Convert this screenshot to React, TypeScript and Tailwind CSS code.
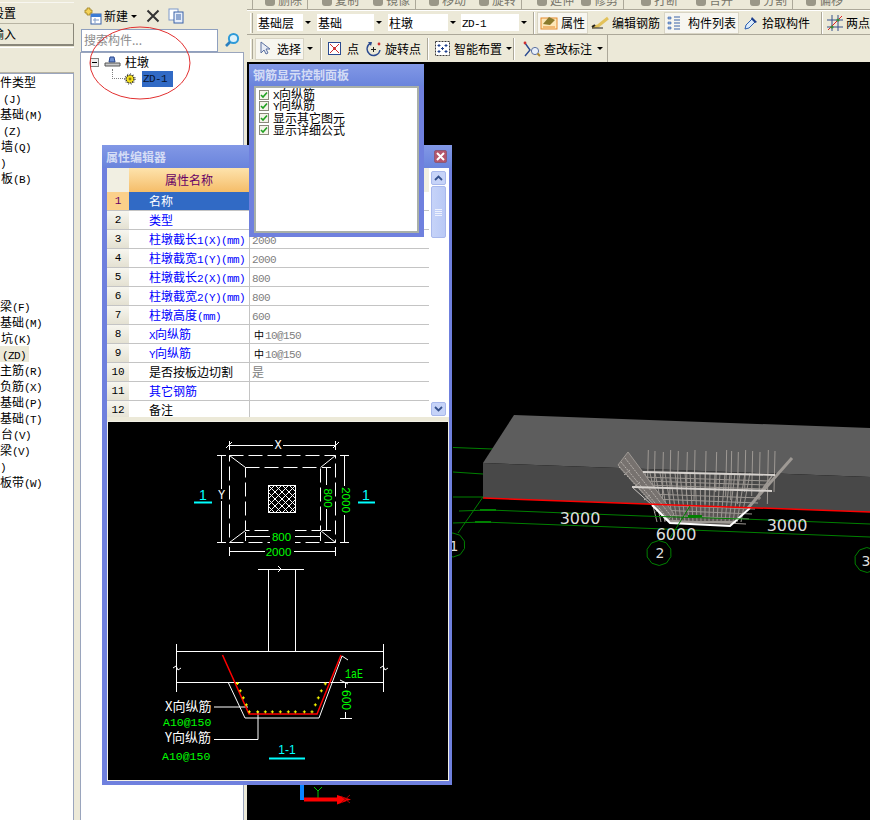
import React from 'react';

// ascii runs are set in a mono face, squeezed to half the width of the CJK glyphs
function Zh({ text }: { text: string }) {
  return (
    <>
      {text.split(/([\x20-\x7e]+)/).map((part, i) =>
        /^[\x20-\x7e]+$/.test(part) ? (
          <span key={i} className="font-['Liberation_Mono','Noto_Sans_CJK_SC',monospace] text-[11px] tracking-[-0.6px]">
            {part}
          </span>
        ) : (
          <span key={i}>{part}</span>
        ),
      )}
    </>
  );
}

function Caret() {
  return <span className="inline-block h-0 w-0 border-x-[3px] border-t-[3px] border-x-transparent border-t-black" />;
}

function Grip() {
  return <span className="h-[20px] w-[3px] shrink-0 border-x border-x-white border-r-[#aca899] bg-[#ece9d8]" />;
}

function Sep() {
  return <span className="block h-[22px] w-[2px] shrink-0 border-l border-[#aca899] bg-white" />;
}

function Select({ label, width }: { label: string; width: string }) {
  return (
    <div className={`flex h-[17px] shrink-0 items-center justify-between bg-white pl-[1px] ${width}`}>
      <span className="whitespace-nowrap text-xs leading-none">
        <Zh text={label} />
      </span>
      <span className="flex h-[17px] w-[9px] items-center justify-center bg-[#ece9d8]">
        <Caret />
      </span>
    </div>
  );
}

function ToolButton({
  icon,
  label,
  width,
  active,
  caret,
  gap = 'gap-[3px]',
}: {
  icon: React.ReactNode;
  label: string;
  width: string;
  active?: boolean;
  caret?: boolean;
  gap?: string;
}) {
  return (
    <div
      className={`flex h-[22px] shrink-0 items-center whitespace-nowrap text-xs ${gap} ${width} ${
        active ? 'border border-[#d8d4c4] bg-[#f7f6f0] px-[2px]' : ''
      }`}
    >
      {icon}
      <span>{label}</span>
      {caret && (
        <span className="flex items-center">
          <Caret />
        </span>
      )}
    </div>
  );
}

const IconNew = () => (
  <svg width="18" height="18" viewBox="0 0 18 18" className="shrink-0">
    <rect x="7" y="7" width="10" height="10" fill="#fff" stroke="#3a62a8" />
    <rect x="7" y="7" width="10" height="3" fill="#3a7bd5" />
    <path d="M9 13h6M11 11v5" stroke="#7f9bc8" />
    <path d="M3 1h3v2h2v3H6v2H3V6H1V3h2z" fill="#f5d35a" stroke="#9c7f1c" strokeWidth=".8" />
  </svg>
);

const IconCopy = () => (
  <svg width="16" height="16" viewBox="0 0 16 16" className="shrink-0">
    <rect x="1" y="1" width="9" height="11" fill="#fff" stroke="#7d99c9" />
    <rect x="6" y="4" width="9" height="11" fill="#e6eefb" stroke="#3a62a8" />
    <path d="M8 7h5M8 9h5M8 11h5" stroke="#3a62a8" />
  </svg>
);

const IconSearch = () => (
  <svg width="16" height="16" viewBox="0 0 16 16">
    <circle cx="9.5" cy="6.5" r="4.6" fill="#dff2fb" stroke="#2f9bd8" strokeWidth="2" />
    <path d="M6 10l-4 4" stroke="#2a7fc0" strokeWidth="2.6" />
  </svg>
);

const IconPier = () => (
  <svg width="17" height="12" viewBox="0 0 17 12">
    <path d="M6 1h4l1 5H5z" fill="#6d8fd0" stroke="#27458c" />
    <path d="M1 7h15v3H1z" fill="#c9c9c9" stroke="#555" />
  </svg>
);

const IconGear = () => (
  <svg width="12" height="12" viewBox="0 0 12 12">
    <circle cx="6" cy="6" r="4" fill="#f6e21c" stroke="#222" strokeWidth="1.2" strokeDasharray="1.6 .9" />
    <circle cx="6" cy="6" r="5.2" fill="none" stroke="#333" strokeWidth="1" strokeDasharray="1 2" />
    <circle cx="6" cy="6" r="1.4" fill="#8a7a10" />
  </svg>
);

const IconProps = () => (
  <svg width="18" height="15" viewBox="0 0 18 15" className="shrink-0">
    <rect x="1" y="3" width="16" height="11" fill="#fde7b8" stroke="#e58a2c" />
    <path d="M3 9l6-7 6 3-5 5z" fill="#8a7a2c" />
    <path d="M3 12h12" stroke="#e58a2c" />
  </svg>
);

const IconEditRebar = () => (
  <svg width="18" height="14" viewBox="0 0 18 14" className="shrink-0">
    <path d="M1 11l6-1 10-8" stroke="#e3c25a" strokeWidth="3" fill="none" />
    <path d="M1 12h11" stroke="#222" />
    <path d="M1 11l3-2" stroke="#222" strokeWidth="2" />
  </svg>
);

const IconList = () => (
  <svg width="14" height="15" viewBox="0 0 14 15" className="shrink-0">
    <path d="M1 2h3v2H1zM1 7h3v2H1zM1 12h3v2H1z" fill="#8fb0df" stroke="#3a62a8" strokeWidth=".6" />
    <path d="M7 2h6M7 5h6M7 8h6M7 11h6M7 14h6" stroke="#3a62a8" />
  </svg>
);

const IconPicker = () => (
  <svg width="16" height="16" viewBox="0 0 16 16" className="shrink-0">
    <path d="M2 14l1-4 6-6 3 3-6 6z" fill="#dcecfb" stroke="#2d5fb0" />
    <path d="M9 2l5 5-2 1-4-4z" fill="#1c3f8c" />
  </svg>
);

const IconTwoPoints = () => (
  <svg width="16" height="16" viewBox="0 0 16 16" className="shrink-0">
    <path d="M0 5h16M0 12h16M5 0v16M11 0v16" stroke="#34508c" />
    <path d="M1 15L15 1" stroke="#e02020" />
    <circle cx="5" cy="12" r="1.6" fill="#3a8a3a" />
    <circle cx="11" cy="5" r="1.6" fill="#3a8a3a" />
  </svg>
);

const IconCursor = () => (
  <svg width="14" height="15" viewBox="0 0 14 15" className="shrink-0">
    <path d="M3 1v11l3-3 2 4 2-1-2-4h4z" fill="#e8ecf5" stroke="#5a6fa0" />
  </svg>
);

const IconPoint = () => (
  <svg width="13" height="13" viewBox="0 0 13 13" className="shrink-0">
    <rect x=".5" y=".5" width="12" height="12" fill="#fff" stroke="#2a4a90" />
    <path d="M2 2l9 9M11 2l-9 9" stroke="#d03030" />
    <circle cx="6.5" cy="6.5" r="1.4" fill="#d03030" />
  </svg>
);

const IconRotate = () => (
  <svg width="16" height="16" viewBox="0 0 16 16" className="shrink-0">
    <path d="M5 2a6.5 6.5 0 1 0 9 7" fill="none" stroke="#2a4a90" strokeWidth="1.4" />
    <path d="M5 8.5h5M7.5 6v5" stroke="#222" />
    <circle cx="13" cy="3" r="1.4" fill="#d03030" />
    <path d="M2 1l4 0-1 4z" fill="#2a4a90" />
  </svg>
);

const IconSmart = () => (
  <svg width="15" height="15" viewBox="0 0 15 15" className="shrink-0">
    <rect x=".5" y=".5" width="14" height="14" fill="#fff" stroke="#3a3a3a" strokeDasharray="2 1" />
    <path d="M4 3v3M2.5 4.5h3M11 3v3M9.5 4.5h3M4 9v3M2.5 10.5h3M11 9v3M9.5 10.5h3M7.5 6v3M6 7.5h3" stroke="#1c3f8c" />
  </svg>
);

const IconCheck = () => (
  <svg width="18" height="16" viewBox="0 0 18 16" className="shrink-0">
    <path d="M2 2l5 7-5 6" stroke="#2a4a90" fill="none" strokeWidth="1.4" />
    <circle cx="2" cy="2" r="1.4" fill="#d03030" />
    <circle cx="12" cy="10" r="3.6" fill="#e8f0fa" stroke="#5a6fa0" />
    <path d="M14.5 12.5l2.500 2.500" stroke="#b08a30" strokeWidth="2" />
  </svg>
);

// [cell width, label, starts a new toolbar group]
const topStrip: [string, string, boolean][] = [
  ['w-[55px]', '删除', true],
  ['w-[57px]', '复制', true],
  ['w-[51px]', '镜像', false],
  ['w-[56px]', '移动', true],
  ['w-[50px]', '旋转', false],
  ['w-[58px]', '延伸', true],
  ['w-[44px]', '修剪', false],
  ['w-[60px]', '打断', true],
  ['w-[55px]', '合并', false],
  ['w-[54px]', '分割', false],
  ['w-[56px]', '偏移', true],
];

const listTop: [string, string][] = [
  ['件类型', 'pl-0'],
  ['(J)', 'pl-[3px]'],
  ['基础(M)', 'pl-0'],
  ['(Z)', 'pl-[3px]'],
  ['墙(Q)', 'pl-px'],
  [')', 'pl-0'],
  ['板(B)', 'pl-px'],
];

const listBottom: [string, string][] = [
  ['梁(F)', 'pl-0'],
  ['基础(M)', 'pl-0'],
  ['坑(K)', 'pl-px'],
  ['(ZD)', 'pl-[2px]'],
  ['主筋(R)', 'pl-0'],
  ['负筋(X)', 'pl-0'],
  ['基础(P)', 'pl-0'],
  ['基础(T)', 'pl-0'],
  ['台(V)', 'pl-px'],
  ['梁(V)', 'pl-0'],
  [')', 'pl-0'],
  ['板带(W)', 'pl-0'],
];

type Row = { no: number; name: string; value?: string; phi?: boolean; plain?: boolean };

const rows: Row[] = [
  { no: 1, name: '名称', value: 'ZD-1' },
  { no: 2, name: '类型' },
  { no: 3, name: '柱墩截长1(X)(mm)', value: '2000' },
  { no: 4, name: '柱墩截宽1(Y)(mm)', value: '2000' },
  { no: 5, name: '柱墩截长2(X)(mm)', value: '800' },
  { no: 6, name: '柱墩截宽2(Y)(mm)', value: '800' },
  { no: 7, name: '柱墩高度(mm)', value: '600' },
  { no: 8, name: 'X向纵筋', value: '10@150', phi: true },
  { no: 9, name: 'Y向纵筋', value: '10@150', phi: true },
  { no: 10, name: '是否按板边切割', value: '是', plain: true },
  { no: 11, name: '其它钢筋' },
  { no: 12, name: '备注', plain: true },
];

function TitleBar({ title, height, close }: { title: string; height: string; close?: boolean }) {
  return (
    <div className={`flex shrink-0 items-center justify-between bg-gradient-to-b from-[#8298e6] to-[#6a84dc] pl-[4px] pr-[5px] ${height}`}>
      <span className="text-xs font-bold text-[#d4dcf5]">{title}</span>
      {close && (
        <span className="flex h-[13px] w-[13px] items-center justify-center rounded-[2px] border border-[#8a5a7a] bg-[#b5566c]">
          <svg width="9" height="9" viewBox="0 0 9 9">
            <path d="M1 1l7 7M8 1L1 8" stroke="#fff" strokeWidth="2" />
          </svg>
        </span>
      )}
    </div>
  );
}

function ScrollBar() {
  return (
    <div className="flex w-[20px] shrink-0 flex-col bg-white pt-[3px] pr-[3px] pl-[2px]">
      <span className="flex h-[14px] items-center justify-center rounded-[2px] border border-[#a8b8ec] bg-[#c6d3f8]">
        <svg width="9" height="6" viewBox="0 0 9 6">
          <path d="M1 5l3.5-3.5L8 5" stroke="#34508c" strokeWidth="1.8" fill="none" />
        </svg>
      </span>
      <span className="mt-[1px] flex h-[52px] flex-col items-center justify-center gap-[1px] rounded-[2px] border border-[#a8b8ec] bg-gradient-to-r from-[#c6d3f8] to-[#b9c9f6]">
        <span className="h-px w-[7px] bg-[#eef2fd]" />
        <span className="h-px w-[7px] bg-[#eef2fd]" />
        <span className="h-px w-[7px] bg-[#eef2fd]" />
        <span className="h-px w-[7px] bg-[#eef2fd]" />
      </span>
      <span className="mt-auto mb-px flex h-[14px] items-center justify-center rounded-[2px] border border-[#a8b8ec] bg-[#c6d3f8]">
        <svg width="9" height="6" viewBox="0 0 9 6">
          <path d="M1 1l3.5 3.5L8 1" stroke="#34508c" strokeWidth="1.8" fill="none" />
        </svg>
      </span>
    </div>
  );
}

function PropertyGrid() {
  return (
    <div className="flex h-[249px] shrink-0 bg-white">
      <div className="min-w-0 flex-1 overflow-hidden">
        <div className="flex h-[24px] text-xs">
          <span className="w-[22px] shrink-0 bg-[#f1efe2]" />
          <span className="flex w-[120px] shrink-0 items-center justify-center bg-gradient-to-b from-[#fde3ac] to-[#f5bd68] text-[#660066]">属性名称</span>
          <span className="flex-1 bg-[#f1efe2]" />
        </div>
        {rows.map((r) => (
          <div key={r.no} className="flex h-[19px] border-b border-[#c4c4c4] text-xs leading-[18px]">
            <span
              className={`w-[22px] shrink-0 text-center font-['Liberation_Mono',monospace] text-[11px] ${
                r.no === 1 ? 'bg-[#fbd08a] text-[#660066]' : 'bg-gradient-to-b from-[#f7f6ef] to-[#e4e1d2]'
              }`}
            >
              {r.no}
            </span>
            <span
              className={`w-[121px] shrink-0 border-r border-[#c4c4c4] pl-[20px] whitespace-nowrap ${
                r.no === 1 ? 'bg-[#316ac5] text-white' : r.plain ? 'text-black' : 'text-[#0000ff]'
              }`}
            >
              <Zh text={r.name} />
            </span>
            <span className="flex-1 pl-[2px] whitespace-nowrap text-[#808080]">
              {r.phi && <span className="pr-[1px] pl-[2px] text-[10px] text-black">中</span>}
              {r.value && <Zh text={r.value} />}
            </span>
          </div>
        ))}
      </div>
      <ScrollBar />
    </div>
  );
}

const mono = "'Liberation Mono', 'Noto Sans CJK SC', monospace";
const sans = "'Liberation Sans', sans-serif";
const zh = "'Noto Sans CJK SC', 'Liberation Mono', sans-serif";

function Plan() {
  const hatch = [0, 7, 14, 21, 28, -7, -14, -21];
  return (
    <g fill="none" stroke="#fff" strokeWidth="1">
      <rect x="229.5" y="455.5" width="106" height="87" strokeDasharray="14 5" />
      <rect x="245.5" y="467.5" width="75" height="63" strokeDasharray="14 5" />
      <path d="M229.5 455.5l16 12M335.5 455.5l-15 12M229.5 542.5l16-12M335.5 542.5l-15-12" />
      <rect x="268.5" y="485.5" width="27" height="27" />
      <clipPath id="hatch">
        <rect x="268.5" y="485.5" width="27" height="27" />
      </clipPath>
      <g clipPath="url(#hatch)">
        {hatch.map((d) => (
          <path key={d} d={`M${268 + d} 485l27 27M${296 - d} 485l-27 27`} />
        ))}
      </g>
      <path d="M229 445.5h107M229.5 441v9M335.5 441v9M226 448l6-6M333 448l6-6" />
      <path d="M221.5 455v87M217 455.500h9M217 542.500h9" />
      <path d="M344.5 455v87M340 455.500h9M340 542.500h9" />
      <path d="M326.5 467v63M322 467.500h9M322 530.500h9" />
      <path d="M245 536.5h75M245.5 532v9M320.5 532v9" />
      <path d="M229 551.5h107M229.5 547v9M335.5 547v9" />
      <g stroke="none" fontFamily={mono} fontSize="12" textAnchor="middle">
        <rect x="273" y="440" width="10" height="10" fill="#000" />
        <text x="278" y="449" fill="#fff">X</text>
        <rect x="217" y="489" width="9" height="12" fill="#000" />
        <text x="221.5" y="499" fill="#fff">Y</text>
      </g>
      <g stroke="none" fontFamily={sans} fontSize="11.500" textAnchor="middle" fill="#00ff00">
        <rect x="270" y="530" width="25" height="13" fill="#000" />
        <text x="281.5" y="541">800</text>
        <rect x="265" y="545" width="29" height="13" fill="#000" />
        <text x="278.5" y="556">2000</text>
        <rect x="321" y="485" width="12" height="24" fill="#000" />
        <text x="0" y="0" transform="translate(324 498) rotate(90)">800</text>
        <rect x="339" y="486" width="12" height="29" fill="#000" />
        <text x="0" y="0" transform="translate(341.500 500) rotate(90)">2000</text>
      </g>
      <g stroke="none" fontFamily={sans} fontSize="14" textAnchor="middle" fill="#00ffff">
        <text x="203" y="500">1</text>
        <text x="366" y="500">1</text>
      </g>
      <path d="M194 502.500h18M358 502.500h17" stroke="#00ffff" strokeWidth="2" />
    </g>
  );
}

function Section() {
  const dots = [
    [433, 454], [458, 454], [481, 454], [502, 454], [526, 454], [550, 454], [571, 454], [598, 454], [621, 454],
    [397, 369], [406, 391], [415, 412], [424, 433], [631, 433], [640, 412], [649, 391], [661, 370],
  ];
  return (
    <g fill="none" stroke="#fff" strokeWidth="1">
      <path d="M258 569.500h46M268.500 569.500V651M295.500 569.500V651" />
      <path d="M278 566l3 3-3 3" />
      <path d="M176.500 651.500h207M176.500 682.500h207M176.500 644v48M383.500 644v48" />
      <path d="M173 668l3-2 2 4 3-2M380 668l3-2 2 4 3-2" />
      <path d="M228 682l17 36h74l23-62" />
      <path d="M342 656l6 4M340 680l8 4" />
      <path d="M214 707h34M214 739.500h44V711" />
      <path d="M345.500 682v36M340 682.500h12M340 718.500h12" />
      <path d="M222.500 655l26.500 59h68l24-59" stroke="#ff0000" strokeWidth="1.500" />
      {dots.map(([x, y]) => (
        <path key={`${x}-${y}`} d={`M${105 + x / 3 - 1.5} ${560 + y / 3 + 0.5}h3M${105 + x / 3} ${560 + y / 3 - 1}v3`} stroke="#ffff00" />
      ))}
      <g stroke="none" fontSize="13" fontFamily={zh}>
        <text x="165" y="711" fill="#fff">X向纵筋</text>
        <text x="165" y="742" fill="#fff">Y向纵筋</text>
      </g>
      <g stroke="none" fontSize="11.500" fontFamily={mono} fill="#00ff00">
        <text x="163" y="726">A10@150</text>
        <text x="162" y="760">A10@150</text>
        <text x="345" y="678" fontSize="13" textLength="18" lengthAdjust="spacingAndGlyphs">1aE</text>
      </g>
      <g stroke="none" fontFamily={sans} fontSize="12" fill="#00ff00" textAnchor="middle">
        <rect x="340" y="688" width="12" height="24" fill="#000" />
        <text x="0" y="0" transform="translate(342 700) rotate(90)">600</text>
      </g>
      <text x="287" y="754" stroke="none" fill="#00ffff" fontSize="12" fontFamily={sans} textAnchor="middle">1-1</text>
      <path d="M269 758.500h36" stroke="#00ffff" strokeWidth="2" />
    </g>
  );
}

function Basket() {
  const bars = [145, 165, 190, 212, 235, 262, 285, 318, 350, 380, 395, 415, 437, 458, 480, 505, 525];
  const meshX = Array.from({ length: 22 }, (_, i) => 645 + i * 5);
  const meshY = [478, 482, 486, 495, 500, 506, 511, 516, 521];
  return (
    <g fill="none" stroke="#9e9994">
      <path d="M652 505l18 18 60 3 20-18z" fill="#5a5654" stroke="none" />
      {bars.map((x, i) => (
        <path key={x} d={`M${600 + x / 3} ${450 + (i % 3)}L${600 + x / 3 - 1} ${492 + (i % 4) * 4}`} />
      ))}
      {meshX.map((x) => (
        <path key={x} d={`M${x} 473L${x + (x - 705) * -0.2} 522`} />
      ))}
      {meshY.map((y, i) => (
        <path key={y} d={`M${640 + i * 3} ${y - 1}L${770 - i * 3} ${y + 3}`} />
      ))}
      <path d="M618 465l10-13 46 62-6 6z" fill="#77726f" />
      <path d="M621 462l48 58M625 458l46 58M619 467l50 55M630 470l-6 5M640 482l-6 5M650 495l-6 5M660 508l-6 5" stroke="#b5b0ab" strokeDasharray="2 1" />
      <path d="M792 458l-44 50" strokeWidth="3" />
      <path d="M772 476l-22 30" strokeWidth="1.500" />
      <path d="M643 472l132 3" stroke="#d6d2ce" strokeWidth="1.800" />
      <path d="M632 487l140 4" stroke="#d6d2ce" strokeWidth="1.800" />
      <path d="M632 487l40 36" stroke="#c8c4c0" />
      <path d="M670 522h66" strokeWidth="2" />
      <path d="M652 505l18 18 60 3 20-18" stroke="#fff" strokeWidth="2" />
    </g>
  );
}

// the viewer draws its grid bubbles as coarse polygons
function Bubble({ cx, cy, r }: { cx: number; cy: number; r: number }) {
  const pts = Array.from({ length: 10 }, (_, i) => {
    const a = (i * Math.PI) / 5 + 0.3;
    return `${(cx + r * Math.cos(a)).toFixed(1)},${(cy + r * Math.sin(a)).toFixed(1)}`;
  }).join(' ');
  return <polygon points={pts} />;
}

function Scene() {
  return (
    <svg className="absolute inset-0 h-full w-full" viewBox="247 62 623 758">
      <g stroke="#008000" fill="none">
        <path d="M453 447.500l40 1.500M453 472l30 2M453 497h30" />
      </g>
      <path d="M514 415L870 428V477L483 463Z" fill="#5d5d5d" />
      <path d="M483 463L870 477V512L483 498Z" fill="#484848" />
      <Basket />
      <path d="M483 498L870 512" stroke="#ff0000" strokeWidth="1.500" />
      <g stroke="#008000" fill="none">
        <path d="M459 511l30-1 154 6 100 3 127 5" />
        <path d="M453 523l30-1 130 5 257 10" />
        <path d="M483 497l-25 36M690 506l-20 32" />
        <path d="M480 510h16M475 522h16M688 516h14" strokeWidth="2" />
        <Bubble cx={453} cy={545} r={12} />
        <Bubble cx={659} cy={553} r={12.5} />
        <Bubble cx={867} cy={560} r={12.5} />
      </g>
      <g fill="#dedede" fontFamily="'DejaVu Sans', sans-serif" fontSize="16" textAnchor="middle">
        <text x="580" y="524">3000</text>
        <text x="676" y="540">6000</text>
        <text x="787" y="531">3000</text>
        <text x="454" y="551" fontSize="14">1</text>
        <text x="660" y="558" fontSize="14">2</text>
        <text x="866" y="566" fontSize="14">3</text>
      </g>
      <path d="M302 785v15" stroke="#0a84ff" strokeWidth="4" />
      <path d="M314 787l4 4 4-4M318 791v7" stroke="#00c000" fill="none" />
      <path d="M304 799.500h33" stroke="#ff0000" strokeWidth="4" />
      <path d="M337 795l14 4.500-14 5z" fill="#ff0000" />
      <path d="M341 796l9 7M350 795l-9 8" stroke="#a00000" />
    </svg>
  );
}

export default function App() {
  return (
    <div className="relative flex h-[820px] w-[870px] overflow-hidden bg-[#ece9d8] font-['Noto_Sans_CJK_SC','Liberation_Sans',sans-serif] text-xs text-black">
      {/* left nav */}
      <div className="flex w-[74px] shrink-0 flex-col">
        <div className="mt-[2px] flex h-[22px] items-center overflow-hidden border-y border-[#f8f7f1] border-b-[#b8b4a3] whitespace-nowrap">
          <span className="-ml-[8px]">设置</span>
        </div>
        <div className="flex h-[22px] items-center overflow-hidden border-r border-b-2 border-[#8a877a] whitespace-nowrap">
          <span className="-ml-[8px]">输入</span>
        </div>
        <div className="mt-[1px] h-[26px] border-t border-white border-b border-b-[#b8b4a3]" />
        <div className="flex-1 overflow-hidden border-t border-r border-[#9aa5bd] bg-white text-[12px] leading-[16px]">
          {listTop.map(([t, pad]) => (
            <div key={t} className={`h-[16px] whitespace-nowrap ${pad}`}>
              <Zh text={t} />
            </div>
          ))}
          <div className="h-[112px]" />
          {listBottom.map(([t, pad]) => (
            <div key={t} className={`h-[16px] w-[29px] whitespace-nowrap ${pad} ${t === '(ZD)' ? 'bg-[#ece9d8]' : ''}`}>
              <Zh text={t} />
            </div>
          ))}
        </div>
      </div>

      {/* component tree */}
      <div className="ml-[6px] flex w-[164px] shrink-0 flex-col">
        <div className="mt-[4px] flex h-[24px] items-center pl-[4px]">
          <IconNew />
          <span className="ml-[2px]">新建</span>
          <span className="ml-[3px] flex">
            <Caret />
          </span>
          <svg width="14" height="14" viewBox="0 0 14 14" className="ml-[9px]">
            <path d="M1.500 1.500l11 11M12.500 1.500l-11 11" stroke="#333" strokeWidth="2" />
          </svg>
          <span className="ml-[8px]">
            <IconCopy />
          </span>
        </div>
        <div className="flex h-[24px] items-center">
          <div className="ml-px flex h-[23px] w-[137px] items-center border border-[#8fa0bf] bg-white pl-[2px] text-[#8c8c8c]">搜索构件...</div>
          <span className="ml-[6px]">
            <IconSearch />
          </span>
        </div>
        <div className="flex-1 border-x border-t border-[#9aa5bd] bg-white pt-[1px]">
          <div className="flex h-[16px] items-center pl-[9px]">
            <span className="flex h-[9px] w-[9px] items-center justify-center border border-[#808080] bg-[#eee]">
              <span className="h-px w-[5px] bg-black" />
            </span>
            <span className="ml-[5px]">
              <IconPier />
            </span>
            <span className="ml-[4px]">柱墩</span>
          </div>
          <div className="mt-[1px] flex h-[16px] items-center pl-[31px]">
            <span className="h-[10px] w-[13px] -translate-y-[5px] border-b border-l border-dotted border-[#808080]" />
            <span className="-ml-[1px]">
              <IconGear />
            </span>
            <span className="ml-[6px] flex h-[16px] w-[31px] items-center bg-[#316ac5] pl-[1px] text-[#0a1530]">
              <Zh text="ZD-1" />
            </span>
          </div>
        </div>
      </div>

      {/* main */}
      <div className="ml-[3px] flex min-w-0 flex-1 flex-col">
        <div className="flex h-[10px] shrink-0 overflow-hidden border-b border-[#aca899] pl-[5px]">
          {topStrip.map(([w, label, group]) => (
            <div
              key={label}
              className={`flex shrink-0 justify-end gap-[3px] pr-[5px] text-[#77756a] ${w} ${group ? 'border-l border-[#aca899]' : ''}`}
            >
              <span className="h-[6px] w-[10px] shrink-0 rounded-b-[3px] bg-[#9a9788]" />
              <span className="-mt-[8px] shrink-0">{label}</span>
            </div>
          ))}
        </div>
        <div className="flex h-[25px] shrink-0 items-center border-b border-[#aca899] border-t border-t-white pl-[3px]">
          <Grip />
          <span className="ml-[4px]">
            <Select label="基础层" width="w-[55px]" />
          </span>
          <span className="ml-[5px]">
            <Select label="基础" width="w-[66px]" />
          </span>
          <span className="ml-[5px]">
            <Select label="柱墩" width="w-[69px]" />
          </span>
          <span className="ml-[4px]">
            <Select label="ZD-1" width="w-[67px]" />
          </span>
          <span className="ml-[5px]">
            <Sep />
          </span>
          <span className="ml-[2px]">
            <ToolButton icon={<IconProps />} label="属性" width="w-[51px]" active />
          </span>
          <span className="ml-[3px]">
            <ToolButton icon={<IconEditRebar />} label="编辑钢筋" width="w-[67px]" />
          </span>
          <span className="ml-[6px]">
            <ToolButton icon={<IconList />} label="构件列表" width="w-[75px]" gap="gap-[7px]" active />
          </span>
          <span className="ml-[4px]">
            <ToolButton icon={<IconPicker />} label="拾取构件" width="w-[68px]" />
          </span>
          <span className="ml-[10px]">
            <Sep />
          </span>
          <span className="ml-[4px]">
            <ToolButton icon={<IconTwoPoints />} label="两点" width="w-[44px]" />
          </span>
        </div>
        <div className="flex h-[27px] shrink-0 items-center pl-[3px]">
          <Grip />
          <span className="ml-[2px]">
            <ToolButton icon={<IconCursor />} label="选择" width="w-[49px]" gap="gap-[5px]" active />
          </span>
          <span className="ml-[3px] flex">
            <Caret />
          </span>
          <span className="ml-[7px]">
            <Sep />
          </span>
          <span className="ml-[6px]">
            <ToolButton icon={<IconPoint />} label="点" width="w-[29px]" gap="gap-[6px]" />
          </span>
          <span className="ml-[9px]">
            <ToolButton icon={<IconRotate />} label="旋转点" width="w-[54px]" />
          </span>
          <span className="ml-[7px]">
            <Sep />
          </span>
          <span className="ml-[6px]">
            <ToolButton icon={<IconSmart />} label="智能布置" width="w-[76px]" gap="gap-[4px]" caret />
          </span>
          <span className="ml-[2px]">
            <Sep />
          </span>
          <span className="ml-[8px]">
            <ToolButton icon={<IconCheck />} label="查改标注" width="w-[74px]" />
          </span>
          <span className="flex h-[27px] items-center border-r border-[#aca899] pr-[4px]">
            <Caret />
          </span>
        </div>
        <div className="relative flex-1 bg-black">
          <Scene />
        </div>
      </div>

      {/* floating property editor */}
      <div className="absolute top-[145px] left-[102px] flex h-[640px] w-[350px] flex-col bg-[#6f80de] pr-[3px] pb-[4px] pl-[5px]">
        <div className="-mr-[3px] -ml-[5px]">
          <TitleBar title="属性编辑器" height="h-[23px]" close />
        </div>
        <PropertyGrid />
        <div className="h-[4px] shrink-0 bg-[#ece9d8]" />
        <div className="min-h-0 flex-1 border border-[#f2f0e6] bg-black">
          <svg className="block h-full w-full" viewBox="108 422 340 358">
            <Plan />
            <Section />
          </svg>
        </div>
      </div>

      {/* floating rebar panel */}
      <div className="absolute top-[64px] left-[249px] flex h-[173px] w-[175px] flex-col bg-[#6f80de] px-[5px] pb-[4px]">
        <div className="-mx-[5px]">
          <TitleBar title="钢筋显示控制面板" height="h-[22px]" />
        </div>
        <div className="flex-1 border-2 border-[#a9b0a8] bg-white pt-[1px] pl-[3px]">
          {['X向纵筋', 'Y向纵筋', '显示其它图元', '显示详细公式'].map((t) => (
            <div key={t} className="flex h-[11.67px] items-center gap-[4px] leading-none">
              <span className="flex h-[10px] w-[10px] shrink-0 items-center justify-center border border-[#8a8a7a] bg-[#f4f4ea]">
                <svg width="8" height="8" viewBox="0 0 8 8">
                  <path d="M1 4l2 2 4-4.500" stroke="#21a121" strokeWidth="1.600" fill="none" />
                </svg>
              </span>
              <span className="whitespace-nowrap">
                <Zh text={t} />
              </span>
            </div>
          ))}
        </div>
      </div>

      {/* red hand-drawn mark around the tree */}
      <svg className="pointer-events-none absolute top-[26px] left-[89px]" width="102" height="74" viewBox="0 0 102 74">
        <ellipse cx="51" cy="37" rx="50" ry="36" fill="none" stroke="#e23030" strokeWidth="1" />
      </svg>
    </div>
  );
}
